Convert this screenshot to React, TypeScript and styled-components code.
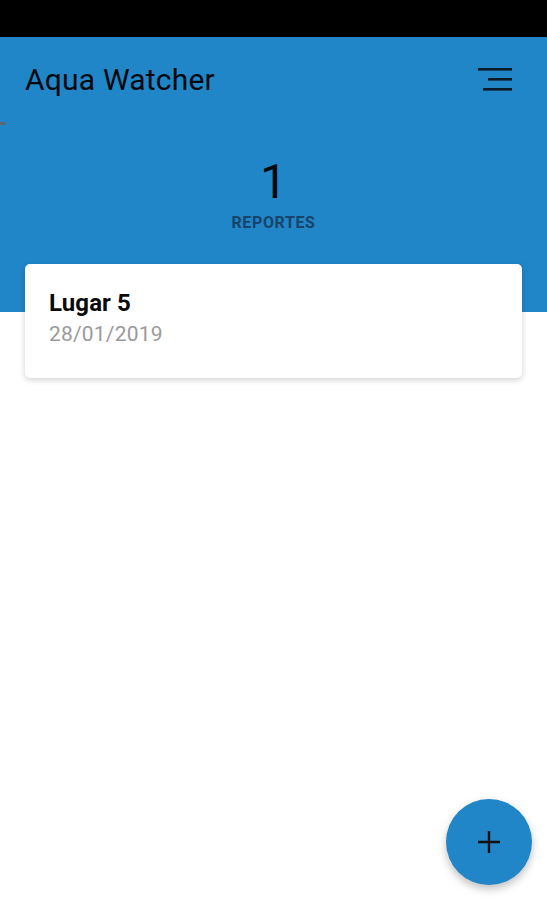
import React from "react";
import styled, { createGlobalStyle } from "styled-components";

const GlobalStyle = createGlobalStyle`
  html, body {
    margin: 0;
    padding: 0;
    background: #fff;
    font-family: Roboto, "Noto Sans", sans-serif;
  }
`;

const Screen = styled.div`
  position: relative;
  width: 547px;
  height: 900px;
  overflow: hidden;
  background: #fff;
`;

const StatusBar = styled.div`
  height: 37px;
  background: #000;
`;

const Header = styled.header`
  position: relative;
  height: 275px;
  background: #2086c8;
`;

const Toolbar = styled.div`
  display: flex;
  align-items: center;
  justify-content: space-between;
  height: 84px;
  padding: 0 34px 0 25px;
`;

const Title = styled.h1`
  margin: 0;
  font-size: 30px;
  font-weight: 400;
  color: #05090d;
  letter-spacing: 0.2px;
`;

const MenuButton = styled.button`
  border: 0;
  background: none;
  padding: 0;
  display: flex;
  cursor: pointer;
`;

const ScrollMark = styled.div`
  position: absolute;
  left: 0;
  top: 85px;
  width: 6px;
  height: 3px;
  background: #58697a;
`;

const Counter = styled.div`
  display: flex;
  flex-direction: column;
  align-items: center;
  padding-top: 33px;
`;

const Count = styled.div`
  font-size: 48px;
  line-height: 56px;
  font-weight: 400;
  color: #05090d;
`;

const CountLabel = styled.div`
  margin-top: 3px;
  font-size: 16px;
  line-height: 19px;
  font-weight: 700;
  color: #174468;
  letter-spacing: 0.6px;
`;

const List = styled.div`
  position: relative;
  margin-top: -48px;
  padding: 0 25px;
`;

const Card = styled.div`
  background: #fff;
  border-radius: 5px;
  box-shadow: 0 2px 6px rgba(0, 0, 0, 0.18);
  padding: 26px 24px 29px;
  height: 59px;
`;

const CardTitle = styled.div`
  font-size: 24px;
  font-weight: 700;
  color: #0b0b0b;
  line-height: 27px;
  letter-spacing: 0.1px;
`;

const CardDate = styled.div`
  margin-top: 5px;
  font-size: 21px;
  color: #9a9a9a;
  line-height: 25px;
  letter-spacing: 0.2px;
`;

const Fab = styled.button`
  position: absolute;
  right: 15px;
  bottom: 15px;
  width: 86px;
  height: 86px;
  border-radius: 50%;
  border: 0;
  background: #2086c8;
  box-shadow: 0 4px 8px rgba(0, 0, 0, 0.25);
  display: flex;
  align-items: center;
  justify-content: center;
  cursor: pointer;
`;

const MenuIcon = () => (
  <svg width="36" height="26" viewBox="0 0 36 26">
    <rect x="1" y="2" width="34" height="2.6" fill="#0b1a26" />
    <rect x="11" y="12" width="24" height="2.6" fill="#0b1a26" />
    <rect x="6" y="22" width="29" height="2.6" fill="#0b1a26" />
  </svg>
);

const PlusIcon = () => (
  <svg width="24" height="24" viewBox="0 0 24 24">
    <path d="M12 1v22M1 12h22" stroke="#111" strokeWidth="2.4" />
  </svg>
);

export default function App() {
  return (
    <Screen>
      <GlobalStyle />
      <StatusBar />
      <Header>
        <Toolbar>
          <Title>Aqua Watcher</Title>
          <MenuButton aria-label="Menú">
            <MenuIcon />
          </MenuButton>
        </Toolbar>
        <ScrollMark />
        <Counter>
          <Count>1</Count>
          <CountLabel>REPORTES</CountLabel>
        </Counter>
      </Header>
      <List>
        <Card>
          <CardTitle>Lugar 5</CardTitle>
          <CardDate>28/01/2019</CardDate>
        </Card>
      </List>
      <Fab aria-label="Agregar">
        <PlusIcon />
      </Fab>
    </Screen>
  );
}
